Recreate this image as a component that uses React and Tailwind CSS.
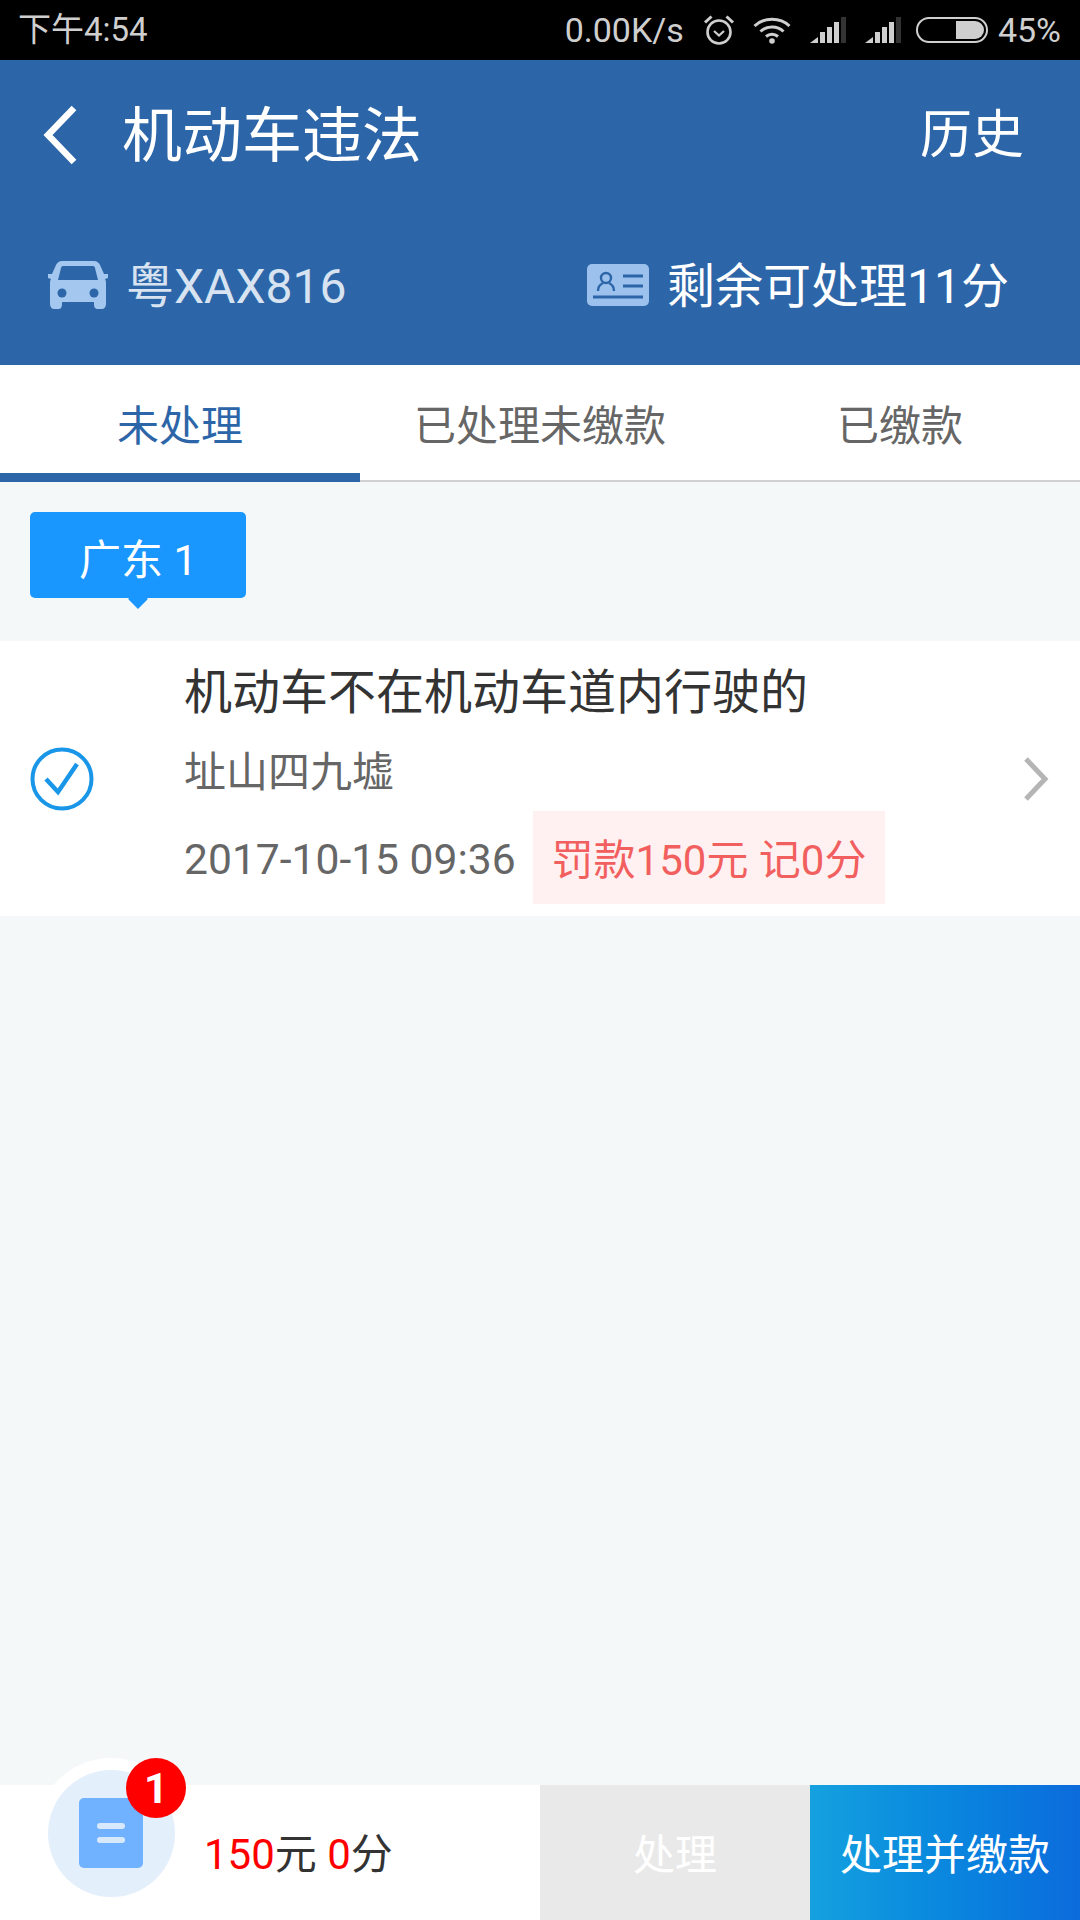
const font = "font-['Roboto','Noto_Sans_CJK_SC',sans-serif]";

function Alarm() {
  return (
    <svg width="32" height="32" viewBox="0 0 32 32" fill="none" stroke="#cfcfcf" strokeWidth="2.6">
      <circle cx="16" cy="18" r="11.5" />
      <path d="M11 17l5 4.5 5-4.5" strokeWidth="2.2" />
      <path d="M2 8.5L8.5 2.5M30 8.5L23.5 2.5" strokeWidth="3" />
    </svg>
  );
}

function Wifi() {
  return (
    <svg width="38" height="28" viewBox="0 0 38 28" fill="none" stroke="#cfcfcf" strokeWidth="3">
      <path d="M1.5 10C11 1 27 1 36.5 10" />
      <path d="M7.5 15.5C13.5 9.5 24.5 9.5 30.5 15.5" />
      <path d="M13 20.5C16.5 17.5 21.5 17.5 25 20.5" />
      <circle cx="19" cy="25" r="2.8" fill="#cfcfcf" stroke="none" />
    </svg>
  );
}

function Signal() {
  return (
    <svg width="36" height="26" viewBox="0 0 36 26" fill="#cfcfcf">
      <path d="M0 26L8 20V26Z" />
      <rect x="10" y="15" width="5" height="11" />
      <rect x="17" y="10" width="5" height="16" />
      <rect x="24" y="5" width="5" height="21" />
      <rect x="31" y="0" width="5" height="26" fill="#333" />
    </svg>
  );
}

function Battery() {
  return (
    <div className="flex h-[26px] w-[72px] items-stretch justify-end rounded-[13px] border-2 border-[#cfcfcf] p-[2px]">
      <div className="w-[28px] rounded-r-[10px] bg-[#cfcfcf]" />
    </div>
  );
}

function BackArrow() {
  return (
    <svg width="36" height="60" viewBox="0 0 36 60" fill="none" stroke="white" strokeWidth="6.5">
      <path d="M32 3L6 30L32 57" />
    </svg>
  );
}

function RowArrow() {
  return (
    <svg width="26" height="44" viewBox="0 0 26 44" fill="none" stroke="#b5b5b5" strokeWidth="5">
      <path d="M3 2L22 22L3 42" />
    </svg>
  );
}

function CarIcon() {
  return (
    <svg width="60" height="48" viewBox="0 0 60 48" fill="#a3c7ee">
      <path d="M14 0H46C49 0 51 2 52 4L56 13H60V17L57 18C58 20 58 21 58 23V43C58 46 56 48 54 48H50C47 48 46 46 46 43V41H14V43C14 46 13 48 10 48H6C4 48 2 46 2 43V23C2 21 2 20 3 18L0 17V13H4L8 4C9 2 11 0 14 0Z" />
      <path d="M15 5H45C46 5 47 6 47 7L50 19H10L13 7C13 6 14 5 15 5Z" fill="#2d66a8" />
      <circle cx="14" cy="32" r="4.5" fill="#2d66a8" />
      <circle cx="46" cy="32" r="4.5" fill="#2d66a8" />
    </svg>
  );
}

function LicenseIcon() {
  return (
    <svg width="62" height="42" viewBox="0 0 62 42">
      <rect width="62" height="42" rx="5" fill="#9bc1ec" />
      <g fill="none" stroke="#2d66a8" strokeWidth="2.4">
        <circle cx="19" cy="14" r="5" />
        <path d="M11 27C11 22 14 20 16 19M27 27C27 22 24 20 22 19" />
        <path d="M36 12H56M36 22H56" strokeWidth="3" />
        <path d="M6 33H56" strokeWidth="3" />
      </g>
    </svg>
  );
}

function CheckCircle() {
  return (
    <svg width="64" height="64" viewBox="0 0 64 64" fill="none" stroke="#1a96e8">
      <circle cx="32" cy="32" r="29.5" strokeWidth="4" />
      <path d="M16 32L28 45L47 17" strokeWidth="4.5" />
    </svg>
  );
}

function Tab({ label, active }) {
  return (
    <div
      className={`flex flex-1 justify-center pt-[34px] text-[42px] leading-[56px] ${
        active ? "border-b-[9px] border-[#2d66a8] text-[#2d66a8]" : "border-b-[2px] border-[#d0d0d2] text-[#666666]"
      }`}
    >
      {label}
    </div>
  );
}

export default function App() {
  return (
    <div className={`relative flex h-[1920px] w-[1080px] flex-col overflow-hidden bg-[#f5f8f9] ${font}`}>
      {/* status bar */}
      <div className="flex h-[60px] items-center justify-between bg-black pl-[18px] pr-[19px] text-[33px] text-[#cfcfcf]">
        <span>下午4:54</span>
        <div className="flex items-center text-[34px]">
          <span>0.00K/s</span>
          <div className="ml-[19px]"><Alarm /></div>
          <div className="ml-[18px]"><Wifi /></div>
          <div className="ml-[19px]"><Signal /></div>
          <div className="ml-[19px]"><Signal /></div>
          <div className="ml-[15px]"><Battery /></div>
          <span className="ml-[10px]">45%</span>
        </div>
      </div>

      {/* header */}
      <div className="flex h-[305px] flex-col bg-[#2d66a8] text-white">
        <div className="flex h-[150px] items-center justify-between pl-[42px] pr-[56px]">
          <div className="flex items-center">
            <BackArrow />
            <span className="ml-[44px] pt-[4px] text-[60px]">机动车违法</span>
          </div>
          <span className="pt-[2px] text-[52px]">历史</span>
        </div>
        <div className="mt-[45px] flex h-[60px] items-center justify-between pl-[48px] pr-[71px]">
          <div className="flex items-center">
            <CarIcon />
            <span className="ml-[18px] pt-[4px] text-[48px] text-[#d8e3f1]">粤XAX816</span>
          </div>
          <div className="flex items-center">
            <LicenseIcon />
            <span className="ml-[18px] pt-[4px] text-[48px]">剩余可处理11分</span>
          </div>
        </div>
      </div>

      {/* tabs */}
      <div className="flex h-[117px] bg-white">
        <Tab label="未处理" active />
        <Tab label="已处理未缴款" />
        <Tab label="已缴款" />
      </div>

      {/* province tag */}
      <div className="flex h-[159px] items-start pl-[30px] pt-[30px]">
        <div className="relative flex h-[86px] w-[216px] items-center justify-center rounded-[5px] bg-[#1a96ff] pt-[10px] text-[42px] text-white">
          广东 1
          <div className="absolute left-[101px] top-[80px] size-[14px] rotate-45 bg-[#1a96ff]" />
        </div>
      </div>

      {/* violation row */}
      <div className="flex h-[275px] items-center bg-white pl-[30px] pr-[31px]">
        <CheckCircle />
        <div className="ml-[90px] flex flex-1 flex-col self-stretch pt-[24px]">
          <span className="text-[48px] leading-[56px] text-[#333333]">机动车不在机动车道内行驶的</span>
          <span className="mt-[28px] text-[42px] leading-[48px] text-[#666666]">址山四九墟</span>
          <div className="mt-[14px] flex items-center">
            <span className="w-[349px] pt-[5px] text-[42.6px] text-[#666666]">2017-10-15 09:36</span>
            <span className="flex h-[93px] w-[352px] items-center justify-center bg-[#fff1f1] pt-[5px] text-[42px] text-[#f25f5f]">
              罚款150元 记0分
            </span>
          </div>
        </div>
        <RowArrow />
      </div>

      <div className="flex-1" />

      {/* bottom bar */}
      <div className="relative flex h-[135px] bg-white">
        <div className="flex w-[540px] items-center pl-[204px] pt-[3px] text-[42px] text-[#333333]">
          <span className="text-[#ff0000]">150</span>元&nbsp;<span className="text-[#ff0000]">0</span>分
        </div>
        <div className="flex w-[270px] items-center justify-center bg-[#e9e9e9] pt-[6px] text-[42px] text-white">处理</div>
        <div className="flex w-[270px] items-center justify-center bg-gradient-to-r from-[#15a1df] to-[#0d6bdc] pt-[6px] text-[42px] text-white">
          处理并缴款
        </div>

        <div className="absolute left-[36px] top-[-27px] flex size-[150px] items-center justify-center rounded-full bg-white">
          <div className="flex size-[127px] items-center justify-center rounded-full bg-[#e4effc]">
            <div className="flex h-[70px] w-[64px] flex-col items-center justify-center gap-[8px] rounded-[5px] bg-[#70b2ff]">
              <div className="h-[6px] w-[28px] rounded-full bg-[#d9e9fd]" />
              <div className="h-[6px] w-[28px] rounded-full bg-[#d9e9fd]" />
            </div>
          </div>
        </div>
        <div className="absolute left-[126px] top-[-27px] flex size-[60px] items-center justify-center rounded-full bg-[#ff0000] font-['Roboto'] text-[42px] font-bold text-white">
          1
        </div>
      </div>
    </div>
  );
}
